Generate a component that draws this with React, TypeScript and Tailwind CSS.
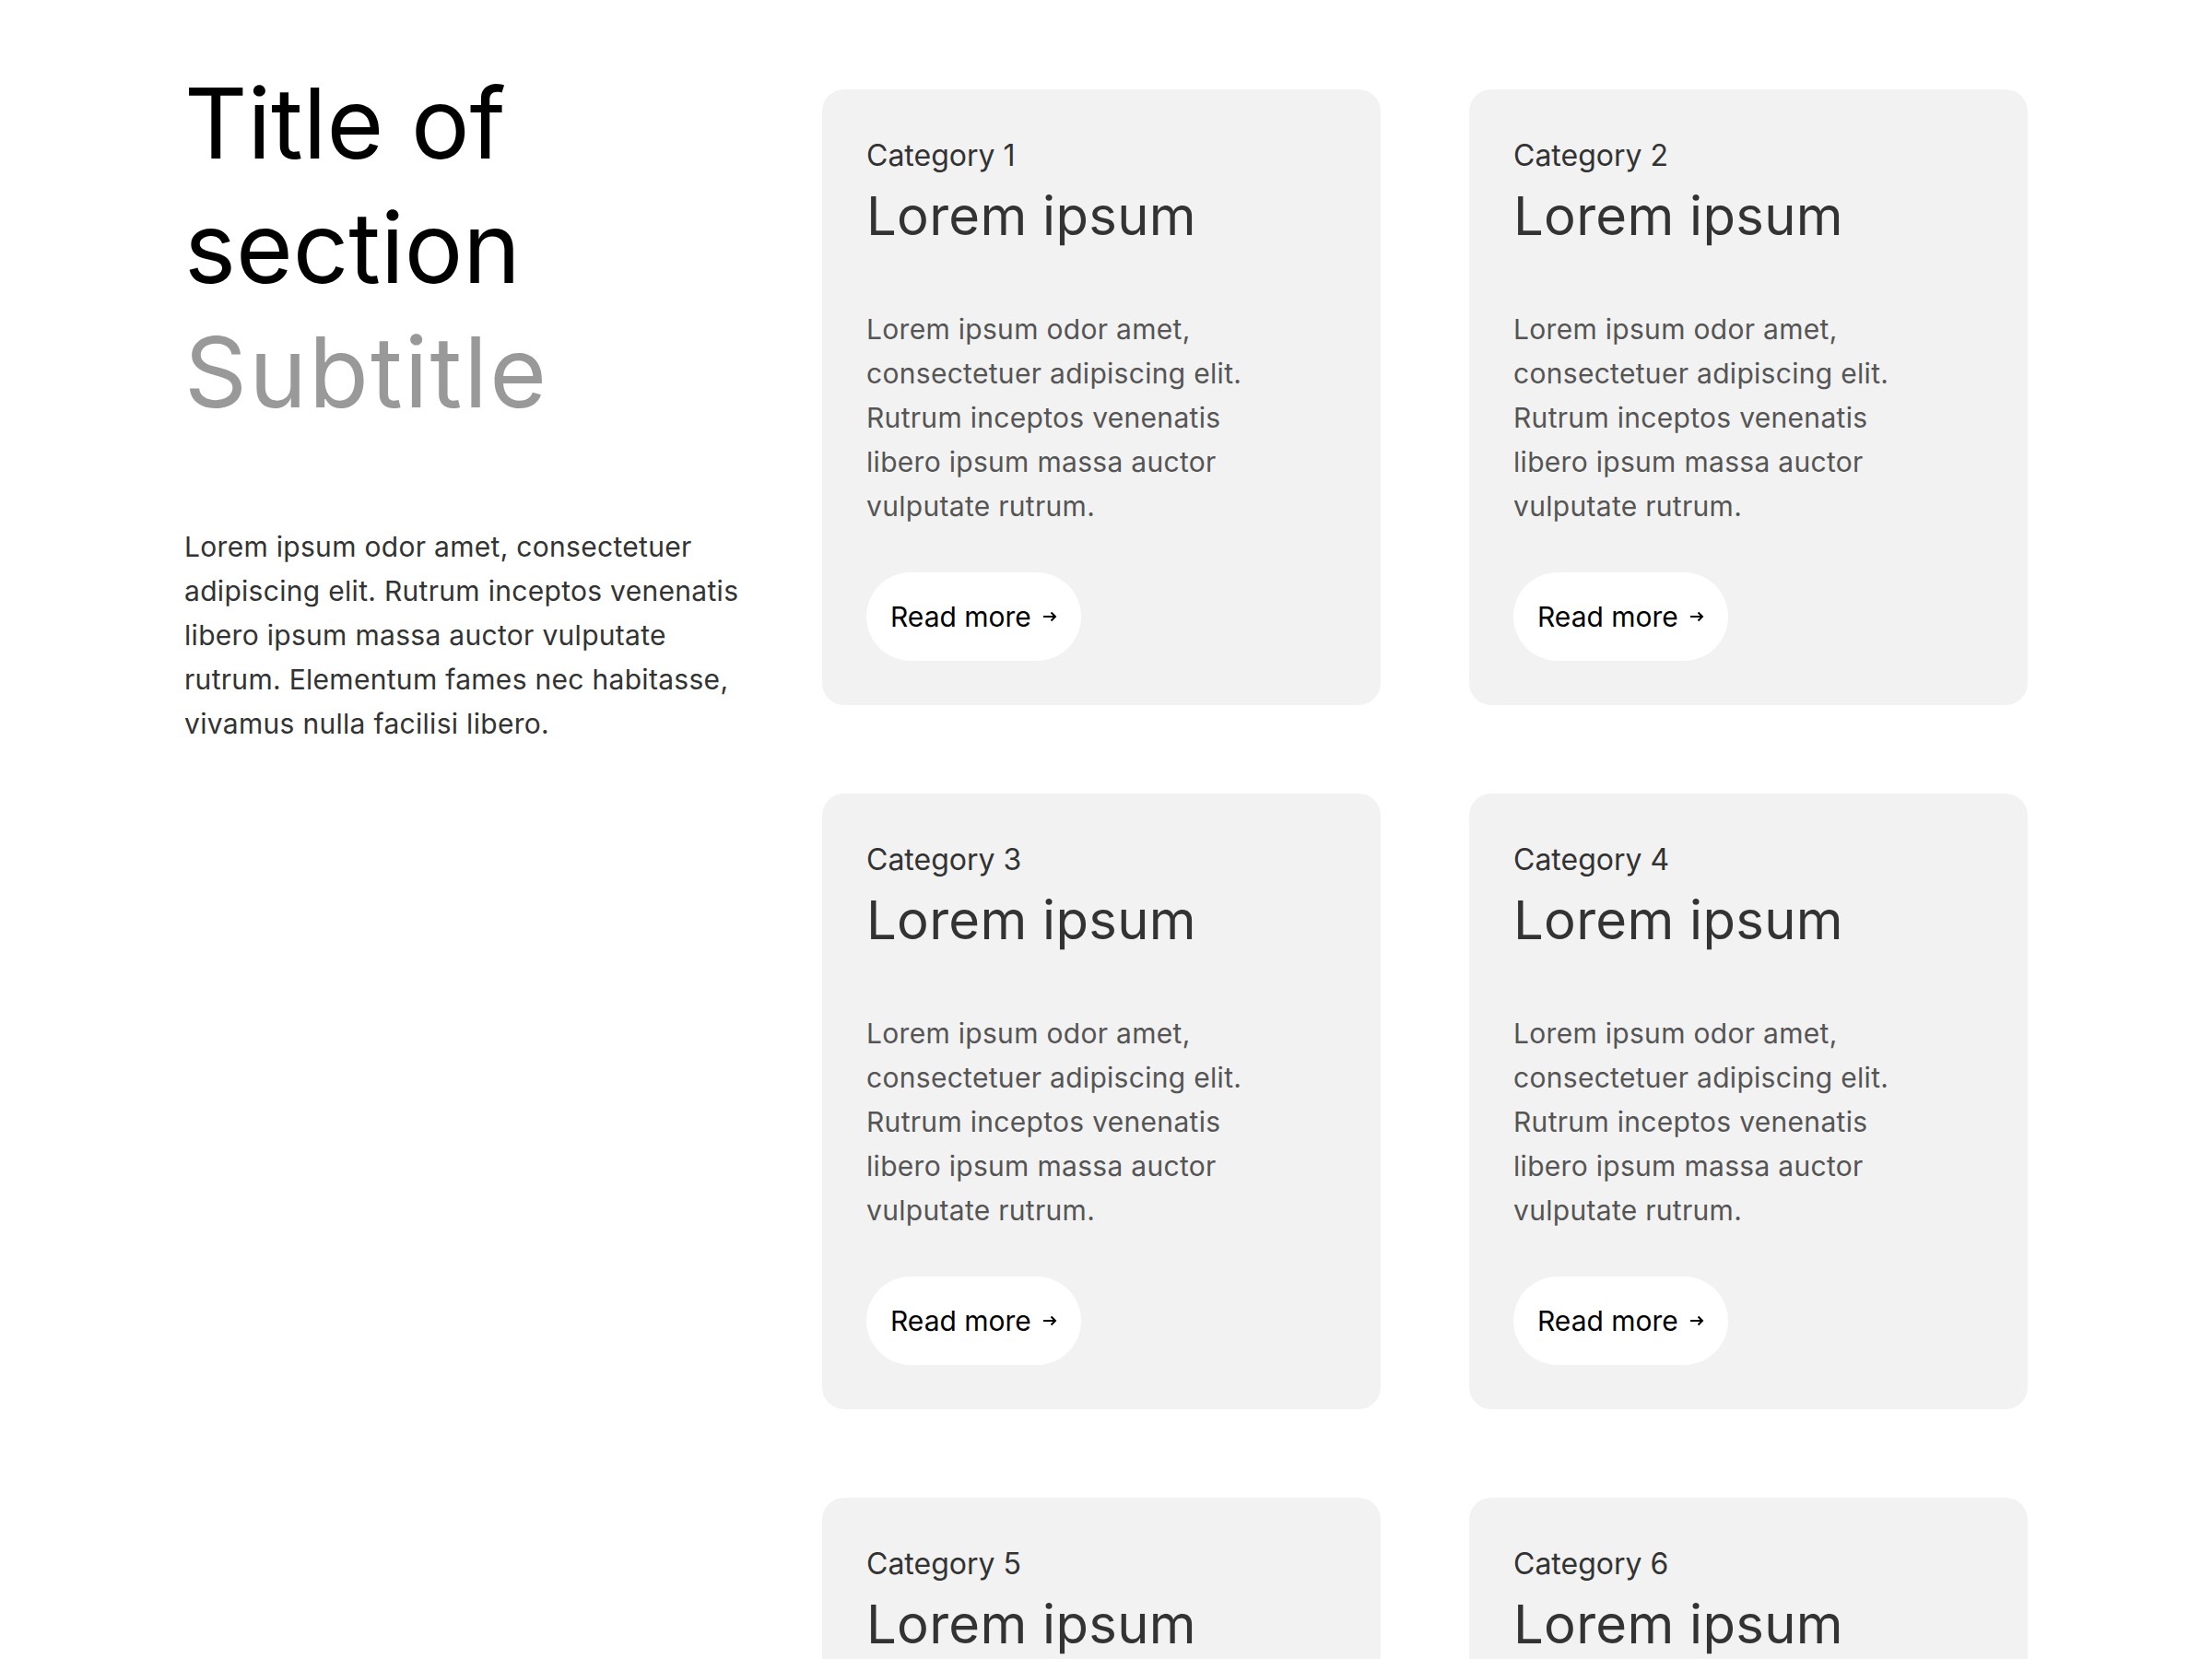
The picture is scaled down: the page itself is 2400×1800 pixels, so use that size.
function ArrowRight() {
  return (
    <svg width="16" height="12" viewBox="0 0 16 12" fill="none" className="shrink-0">
      <path d="M1 6h13M9.5 1.5 14 6l-4.5 4.5" stroke="currentColor" strokeWidth="2" />
    </svg>
  );
}

function Card({ n }: { n: number }) {
  return (
    <div className="flex flex-col items-start rounded-[24px] bg-[#f2f2f2] p-[48px]">
      <span className="text-[32px] leading-[48px] text-[#333]">Category {n}</span>
      <h3 className="text-[58px] leading-[82px] font-normal tracking-[0.005em] text-[#333]">Lorem ipsum</h3>
      <p className="mt-[58px] max-w-[450px] text-[30px] leading-[48px] tracking-[0.01em] text-[#555]">
        Lorem ipsum odor amet, consectetuer adipiscing elit. Rutrum inceptos venenatis libero ipsum
        massa auctor vulputate rutrum.
      </p>
      <a
        href="#"
        className="mt-[48px] inline-flex h-[96px] items-center gap-[12px] rounded-full bg-white px-[26px] text-[30px] text-black"
      >
        Read more
        <ArrowRight />
      </a>
    </div>
  );
}

export default function App() {
  return (
    <div className="min-h-screen bg-white font-['Inter',sans-serif]">
      <section className="mx-auto flex w-[2000px]">
        {/* Left column */}
        <div className="w-[692px] shrink-0 pr-[80px] pt-[66px]">
          <h2 className="text-[106px] leading-[135px] font-normal text-black">
            Title of section
            <br />
            <span className="tracking-[0.02em] text-[#999]">Subtitle</span>
          </h2>
          <p className="mt-[98px] text-[30px] leading-[48px] tracking-[0.01em] text-[#333]">
            Lorem ipsum odor amet, consectetuer adipiscing elit. Rutrum inceptos venenatis libero
            ipsum massa auctor vulputate rutrum. Elementum fames nec habitasse, vivamus nulla
            facilisi libero.
          </p>
        </div>

        {/* Cards */}
        <div className="grid flex-1 grid-cols-2 gap-[96px] pt-[97px] pb-[96px]">
          {[1, 2, 3, 4, 5, 6].map((n) => (
            <Card key={n} n={n} />
          ))}
        </div>
      </section>
    </div>
  );
}
